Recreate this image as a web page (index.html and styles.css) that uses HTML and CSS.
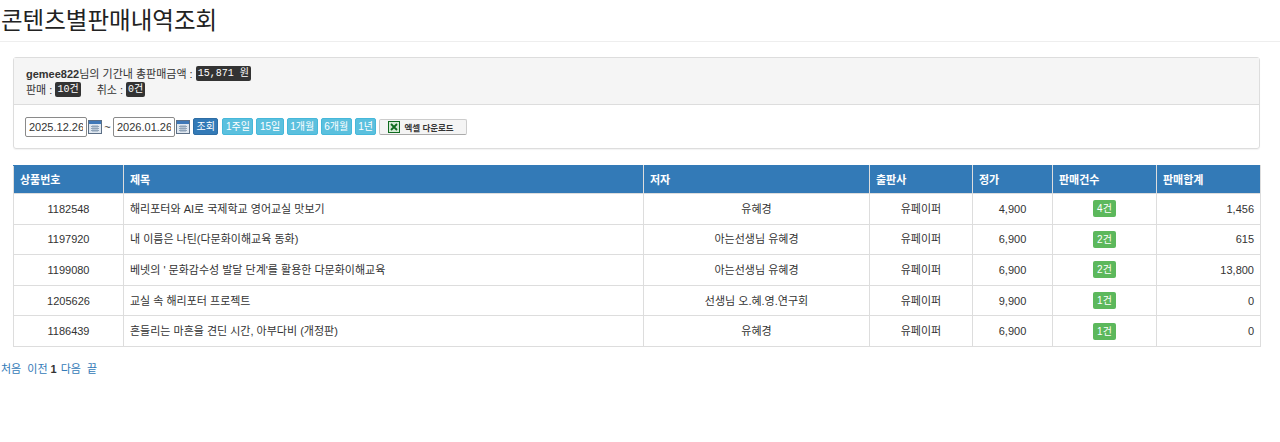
FILE: index.html
```html
<!DOCTYPE html>
<html lang="ko">
<head>
  <meta charset="utf-8">
  <title>콘텐츠별판매내역조회</title>
  <link rel="stylesheet" href="styles.css">
</head>
<body>
  <h1 class="page-title">콘텐츠별판매내역조회</h1>

  <div class="panel">
    <div class="panel-heading">
      <div class="summary-line"><b class="user-id">gemee822</b>님의 기간내 총판매금액 : <span class="code">15,871 원</span></div>
      <div class="summary-line">판매 : <span class="code">10건</span><span class="cancel">취소 : <span class="code">0건</span></span></div>
    </div>
    <div class="panel-body">
      <input class="date-input" type="text" value="2025.12.26">
      <svg class="cal-icon" width="14" height="14" viewBox="0 0 14 14"><rect x="0.5" y="0.5" width="13" height="13" fill="#dfe7f0" stroke="#5c6f86"/><rect x="1" y="1" width="12" height="3" fill="#3f78b8"/><path d="M3 6.5h8M3 8.5h8M3 10.5h8M5 5v7M7 5v7M9 5v7" stroke="#8fa3b8" stroke-width="1" fill="none"/></svg>
      <span class="tilde">~</span>
      <input class="date-input" type="text" value="2026.01.26">
      <svg class="cal-icon" width="14" height="14" viewBox="0 0 14 14"><rect x="0.5" y="0.5" width="13" height="13" fill="#dfe7f0" stroke="#5c6f86"/><rect x="1" y="1" width="12" height="3" fill="#3f78b8"/><path d="M3 6.5h8M3 8.5h8M3 10.5h8M5 5v7M7 5v7M9 5v7" stroke="#8fa3b8" stroke-width="1" fill="none"/></svg>
      <button class="btn btn-primary">조회</button>
      <button class="btn btn-info">1주일</button>
      <button class="btn btn-info">15일</button>
      <button class="btn btn-info">1개월</button>
      <button class="btn btn-info">6개월</button>
      <button class="btn btn-info">1년</button>
      <button class="btn-excel">
        <svg width="12" height="12" viewBox="0 0 12 12"><rect x="0.5" y="0.5" width="11" height="11" fill="#d5ead5" stroke="#0f6b1f"/><path d="M3 3l6 6M9 3l-6 6" stroke="#0f6b1f" stroke-width="1.8"/></svg>
        엑셀 다운로드
      </button>
    </div>
  </div>

  <table class="sales-table">
    <colgroup>
      <col class="col-no"><col class="col-title"><col class="col-author"><col class="col-pub"><col class="col-price"><col class="col-count"><col class="col-total">
    </colgroup>
    <thead>
      <tr>
        <th>상품번호</th><th>제목</th><th>저자</th><th>출판사</th><th>정가</th><th>판매건수</th><th>판매합계</th>
      </tr>
    </thead>
    <tbody>
      <tr>
        <td class="center">1182548</td>
        <td>해리포터와 AI로 국제학교 영어교실 맛보기</td>
        <td class="center">유혜경</td>
        <td class="center">유페이퍼</td>
        <td class="center">4,900</td>
        <td class="center"><span class="label">4건</span></td>
        <td class="right">1,456</td>
      </tr>
      <tr>
        <td class="center">1197920</td>
        <td>내 이름은 나틴(다문화이해교육 동화)</td>
        <td class="center">아는선생님 유혜경</td>
        <td class="center">유페이퍼</td>
        <td class="center">6,900</td>
        <td class="center"><span class="label">2건</span></td>
        <td class="right">615</td>
      </tr>
      <tr>
        <td class="center">1199080</td>
        <td>베넷의 ' 문화감수성 발달 단계'를 활용한 다문화이해교육</td>
        <td class="center">아는선생님 유혜경</td>
        <td class="center">유페이퍼</td>
        <td class="center">6,900</td>
        <td class="center"><span class="label">2건</span></td>
        <td class="right">13,800</td>
      </tr>
      <tr>
        <td class="center">1205626</td>
        <td>교실 속 해리포터 프로젝트</td>
        <td class="center">선생님 오.혜.영.연구회</td>
        <td class="center">유페이퍼</td>
        <td class="center">9,900</td>
        <td class="center"><span class="label">1건</span></td>
        <td class="right">0</td>
      </tr>
      <tr>
        <td class="center">1186439</td>
        <td>흔들리는 마흔을 견딘 시간, 아부다비 (개정판)</td>
        <td class="center">유혜경</td>
        <td class="center">유페이퍼</td>
        <td class="center">6,900</td>
        <td class="center"><span class="label">1건</span></td>
        <td class="right">0</td>
      </tr>
    </tbody>
  </table>

  <div class="pager">
    <a href="#">처음</a>
    <a href="#">이전</a><b>1</b>
    <a href="#">다음</a>
    <a href="#">끝</a>
  </div>
</body>
</html>
```

FILE: styles.css
```css
* {
  box-sizing: border-box;
}

body {
  margin: 0;
  background-color: #fff;
  color: #333;
  font-family: "Liberation Sans", "Noto Sans CJK KR", sans-serif;
  font-size: 11px;
  line-height: 14px;
}

.page-title {
  margin: 0 0 15px;
  padding: 5px 0 0 1px;
  height: 42px;
  border-bottom: 1px solid #eee;
  color: #222;
  font-size: 23.5px;
  font-weight: 400;
  line-height: 32px;
}

.panel {
  width: 1247px;
  height: 92px;
  margin: 0 0 16px 13px;
  border: 1px solid #ddd;
  border-radius: 3px;
  box-shadow: 0 1px 1px rgba(0, 0, 0, 0.05);
}

.panel-heading {
  height: 47px;
  padding: 8px 12px 0;
  background-color: #f5f5f5;
  border-bottom: 1px solid #ddd;
}

.summary-line {
  height: 16px;
  line-height: 16px;
  white-space: nowrap;
}

.user-id {
  font-size: 11px;
}

.code {
  display: inline-block;
  height: 15px;
  padding: 0 2px;
  background-color: #333;
  border-radius: 2px;
  color: #fff;
  font-family: "Liberation Mono", "Noto Sans CJK KR", monospace;
  font-size: 10px;
  line-height: 15px;
  vertical-align: top;
}

.cancel {
  margin-left: 16px;
}

.panel-body {
  display: flex;
  align-items: center;
  height: 43px;
  padding: 0 11px;
}

.date-input {
  width: 62px;
  height: 20px;
  padding: 0 3px;
  border: 1px solid #8a8a8a;
  border-radius: 2px;
  color: #333;
  font-family: "Liberation Sans", sans-serif;
  font-size: 11px;
}

.cal-icon {
  flex: none;
  margin-left: 1px;
}

.tilde {
  width: 11px;
  font-size: 11px;
  text-align: center;
}

.btn {
  height: 17px;
  margin-right: 3px;
  padding: 0 2.5px;
  border: 1px solid;
  border-radius: 2px;
  color: #fff;
  font-family: inherit;
  font-size: 10px;
  line-height: 14px;
}

.btn-primary {
  margin-left: 3px;
  margin-right: 4px;
  background-color: #337ab7;
  border-color: #2e6da4;
}

.btn-info {
  background-color: #5bc0de;
  border-color: #46b8da;
}

.btn-excel {
  display: flex;
  align-items: center;
  gap: 4px;
  width: 88px;
  height: 16px;
  padding: 0 0 0 8px;
  background-color: #f4f4f4;
  border: 1px solid #ccc;
  border-bottom-color: #aaa;
  border-radius: 2px;
  color: #333;
  font-family: inherit;
  font-size: 8.5px;
  font-weight: 700;
  white-space: nowrap;
}

.sales-table {
  width: 1247px;
  margin-left: 13px;
  border-collapse: collapse;
  table-layout: fixed;
}

.col-no { width: 110px; }
.col-title { width: 520px; }
.col-author { width: 226px; }
.col-pub { width: 103px; }
.col-price { width: 80px; }
.col-count { width: 104px; }
.col-total { width: 104px; }

.sales-table th {
  height: 28px;
  padding: 0 6px;
  background-color: #337ab7;
  border: 1px solid #ddd;
  border-top-color: #337ab7;
  color: #fff;
  font-size: 11px;
  font-weight: 700;
  text-align: left;
}

.sales-table td {
  height: 30.6px;
  padding: 0 6px;
  border: 1px solid #ddd;
  color: #333;
  font-size: 11px;
}

.sales-table td.center {
  text-align: center;
}

.sales-table td.right {
  text-align: right;
}

.label {
  display: inline-block;
  height: 17px;
  padding: 0 4px;
  background-color: #5cb85c;
  border-radius: 2px;
  color: #fff;
  font-size: 10px;
  line-height: 17px;
  vertical-align: middle;
}

.pager {
  margin-top: 15px;
  padding-left: 1px;
}

.pager a {
  margin-right: 3px;
  color: #337ab7;
  text-decoration: none;
}

.pager b {
  margin-right: 1px;
  color: #333;
}
```
